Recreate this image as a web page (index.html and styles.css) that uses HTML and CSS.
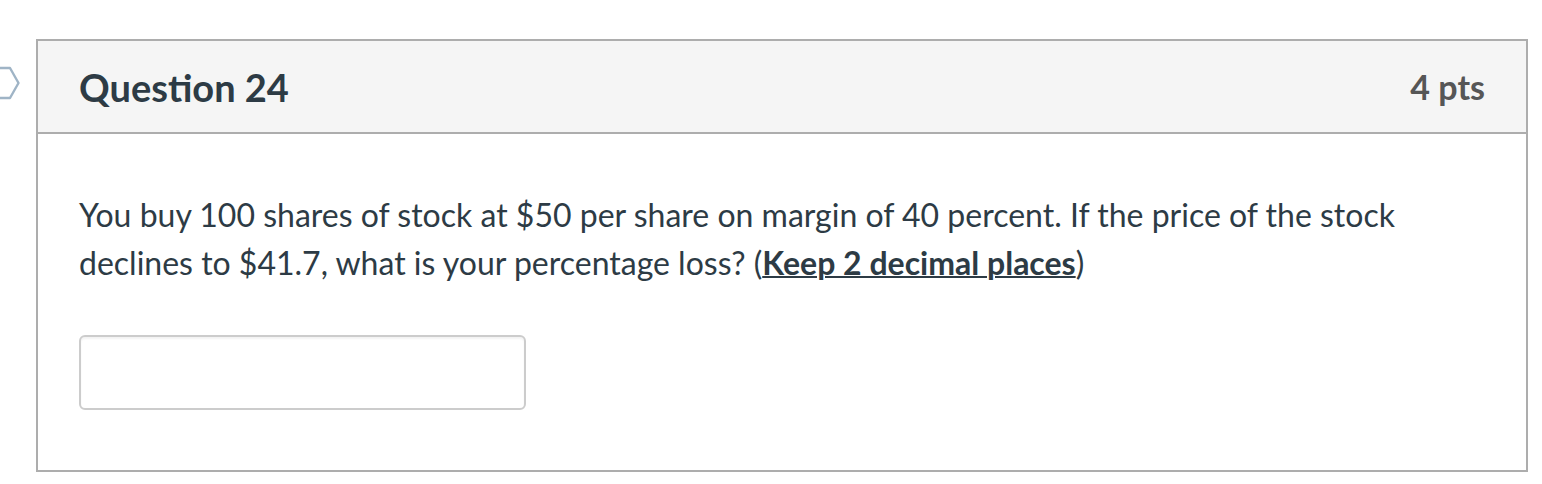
FILE: index.html
```html
<!DOCTYPE html>
<html lang="en">
<head>
<meta charset="utf-8">
<title>Question 24</title>
<link rel="stylesheet" href="styles.css">
</head>
<body>
<div class="page">
  <div class="marker">
    <svg width="22" height="36" viewBox="0 0 22 36" aria-hidden="true">
      <polygon points="-12,2 10,2 18.5,17 10,32 -12,32" fill="none" stroke="#9fb4c6" stroke-width="2.4" stroke-linejoin="round"/>
    </svg>
  </div>
  <div class="question">
    <div class="q-header">
      <h2 class="q-title">Question 24</h2>
      <span class="q-points">4 pts</span>
    </div>
    <div class="q-body">
      <p class="q-text">You buy 100 shares of stock at $50 per share on margin of 40 percent. If the price of the stock declines to $41.7, what is your percentage loss? (<strong class="u">Keep 2 decimal places</strong>)</p>
      <input class="q-input" type="text" aria-label="Answer">
    </div>
  </div>
</div>
</body>
</html>
```
FILE: styles.css
```css
html, body {
  margin: 0;
  padding: 0;
  background: #ffffff;
}
body {
  font-family: Lato, "Noto Sans", "Liberation Sans", sans-serif;
  color: #2d3b45;
}
.page {
  display: flex;
  align-items: flex-start;
  padding-top: 39px;
}
.marker {
  width: 36px;
  flex: 0 0 36px;
  padding-top: 27px;
}
.marker svg {
  display: block;
}
.question {
  width: 1492px;
  box-sizing: border-box;
  border: 2px solid #adadad;
}
.q-header {
  display: flex;
  align-items: center;
  justify-content: space-between;
  height: 91px;
  padding: 0 41px 0 41px;
  background: #f5f5f5;
  border-bottom: 2px solid #adadad;
}
.q-title {
  margin: 0;
  font-size: 38px;
  font-weight: 700;
  color: #2d3b45;
}
.q-points {
  font-size: 34px;
  font-weight: 700;
  color: #565656;
}
.q-body {
  padding: 57px 41px 60px 41px;
}
.q-text {
  margin: 0;
  font-size: 32px;
  line-height: 48px;
  max-width: 1400px;
}
.u {
  font-weight: 700;
  text-decoration: underline;
  text-decoration-thickness: 2px;
}
.q-input {
  display: block;
  margin-top: 48px;
  width: 447px;
  height: 75px;
  box-sizing: border-box;
  border: 2px solid #cccccc;
  border-radius: 6px;
  background: #fff;
  box-shadow: inset 0 2px 2px rgba(0,0,0,0.05);
}
```
